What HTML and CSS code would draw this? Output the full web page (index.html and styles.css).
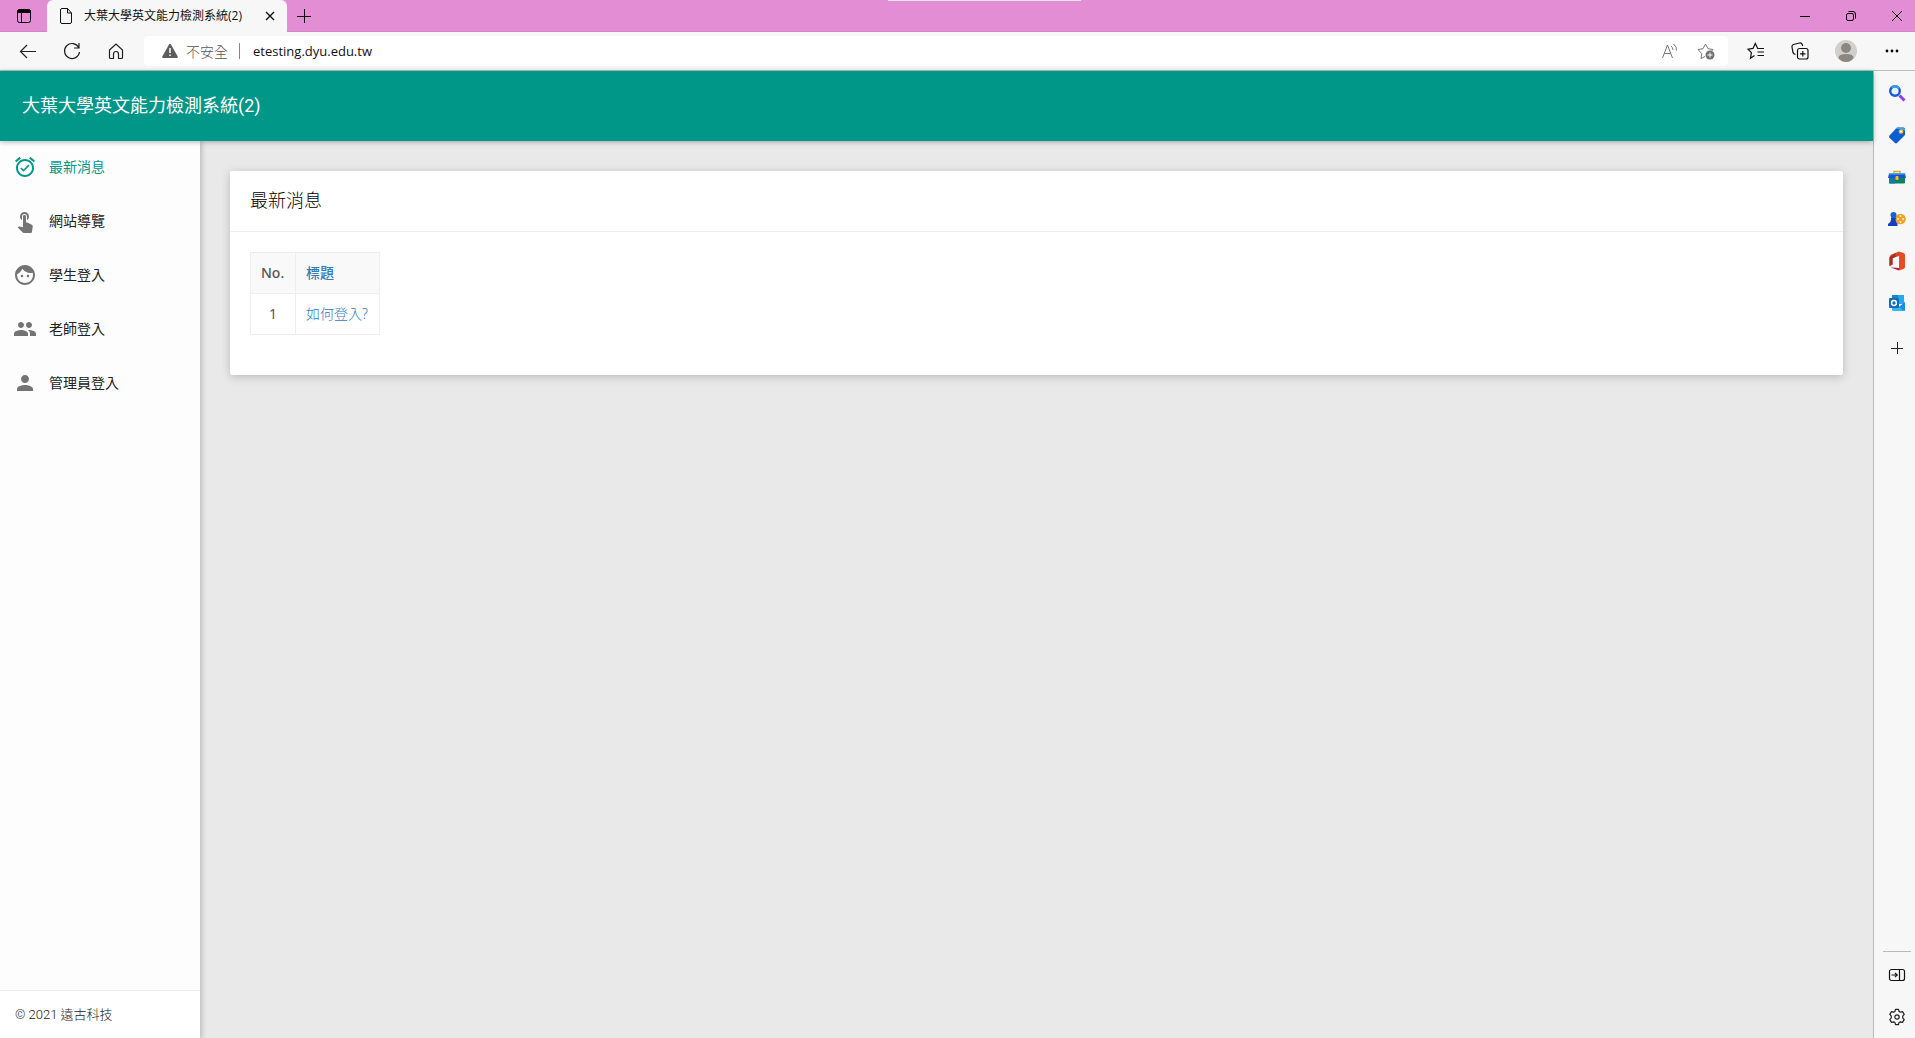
FILE: index.html
```html
<!DOCTYPE html>
<html lang="zh-Hant">
<head>
<meta charset="utf-8">
<title>大葉大學英文能力檢測系統(2)</title>
<link rel="stylesheet" href="styles.css">
</head>
<body>
<div class="titlebar">
  <button class="icon-btn tab-actions" aria-label="Tab actions"><svg width="16" height="16" viewBox="0 0 16 16"><rect x="1.5" y="1.5" width="13" height="13" rx="2" fill="none" stroke="#000"/><path d="M1.500 5V3a1.500 1.500 0 0 1 1.500-1.500h10A1.500 1.500 0 0 1 14.500 3v2z" fill="#000"/><path d="M5.500 5v9.500" stroke="#000"/></svg></button>
  <div class="tab">
    <svg width="14" height="18" viewBox="0 0 14 18" fill="none" stroke="#111"><path d="M3 1.500h5.500l4 4.500v9a1.500 1.500 0 0 1-1.500 1.500H3A1.500 1.500 0 0 1 1.500 15V3A1.500 1.500 0 0 1 3 1.500zM8.500 1.500V6h4"/></svg>
    <span class="tab-title">大葉大學英文能力檢測系統(2)</span>
    <button class="icon-btn" aria-label="Close tab"><svg width="10" height="10" viewBox="0 0 10 10" stroke="#111" stroke-width="1.400"><path d="M1 1l8 8M9 1L1 9"/></svg></button>
  </div>
  <button class="icon-btn new-tab" aria-label="New tab"><svg width="14" height="14" viewBox="0 0 14 14" stroke="#111"><path d="M7.500 0v14M0 7.500h14"/></svg></button>
  <div class="window-controls">
    <button class="icon-btn" aria-label="Minimize"><svg width="12" height="12" viewBox="0 0 12 12" stroke="#000"><path d="M1 6.500h10"/></svg></button>
    <button class="icon-btn" aria-label="Restore"><svg width="12" height="12" viewBox="0 0 12 12" fill="none" stroke="#000"><rect x="1.500" y="3.500" width="7" height="7" rx="1.500"/><path d="M3.500 1.500H8A2.500 2.500 0 0 1 10.500 4v4.500"/></svg></button>
    <button class="icon-btn" aria-label="Close"><svg width="12" height="12" viewBox="0 0 12 12" stroke="#000"><path d="M1 1l10 10M11 1L1 11"/></svg></button>
  </div>
  <span class="grip"></span>
</div>
<div class="toolbar">
  <div class="nav-buttons">
    <button class="icon-btn" aria-label="Back"><svg width="20" height="20" viewBox="0 0 20 20" fill="none" stroke="#222" stroke-width="1.200"><path d="M18 10.500H2.500M9 4l-6.500 6.500L9 17"/></svg></button>
    <button class="icon-btn" aria-label="Refresh"><svg width="20" height="20" viewBox="0 0 20 20" fill="none" stroke="#222" stroke-width="1.200"><path d="M16.700 6.500A7.500 7.500 0 1 0 17.500 11M17 2v5h-5"/></svg></button>
    <button class="icon-btn" aria-label="Home"><svg width="20" height="20" viewBox="0 0 20 20" fill="none" stroke="#222" stroke-width="1.200"><path d="M3.500 9L10 3l6.500 6v7.500q0 1-1 1h-3V13a2.500 2.500 0 0 0-5 0v4.500h-3q-1 0-1-1z"/></svg></button>
  </div>
  <div class="address">
    <svg width="16" height="16" viewBox="0 0 16 16"><path d="M7 1.500q1-1.600 2 0l6.700 12q.6 1.500-1 1.500H1.300q-1.600 0-1-1.500z" fill="#5c5c5c"/><path d="M8 5v5M8 11.500v1.500" stroke="#fff" stroke-width="1.500"/></svg>
    <span class="insecure">不安全</span>
    <input class="url" type="text" aria-label="網址" value="etesting.dyu.edu.tw">
    <button class="icon-btn" aria-label="Read aloud"><svg width="18" height="16" viewBox="0 0 18 16" fill="none" stroke="#777"><path d="M1.500 15L6.500 2l5 13M3.300 10.500h6.500M10 3q2 1.500 2 4M12.500 1q3.500 2.500 3 6.500"/></svg></button>
    <button class="icon-btn" aria-label="Add to favourites"><svg width="18" height="18" viewBox="0 0 18 18"><path d="M8 14.500l-4 2 .7-5L1 7.500l5-.8L8.500 2 11 6.700l5 .8-1.500 1.500" fill="none" stroke="#777"/><circle cx="13" cy="13" r="4.500" fill="#707070"/><path d="M13 10.500v5M10.500 13h5" stroke="#fff"/></svg></button>
  </div>
  <div class="tool-actions">
    <button class="icon-btn" aria-label="Favourites"><svg width="18" height="18" viewBox="0 0 18 18" fill="none" stroke="#111" stroke-width="1.200"><path d="M7.500 13.500l-4 2.700.9-5.500L1 7.200l5-.8L8.300 1.500l2.400 5H17M10.500 10h6.500M10.500 13.500h6.500"/></svg></button>
    <button class="icon-btn" aria-label="Collections"><svg width="18" height="18" viewBox="0 0 18 18" fill="none" stroke="#111" stroke-width="1.200"><rect x="6.500" y="6.500" width="10.500" height="10.500" rx="2"/><path d="M4.500 12.500q-2-.5-2.500-2L1 5q-.3-2 1.500-2.500l6-1.500q2-.4 2.600 1.300L11.700 4M11.800 9v5.500M9 11.800h5.500"/></svg></button>
    <button class="icon-btn" aria-label="Profile"><svg width="22" height="22" viewBox="0 0 22 22"><circle cx="11" cy="11" r="11" fill="#d2cfca"/><circle cx="11" cy="8" r="5" fill="#8c8683"/><path d="M3.500 18q0-4 7.500-4t7.500 4q-3 4-7.500 4t-7.500-4z" fill="#8c8683"/></svg></button>
    <button class="icon-btn" aria-label="More"><svg width="14" height="4" viewBox="0 0 14 4"><circle cx="2" cy="2" r="1.400"/><circle cx="7" cy="2" r="1.400"/><circle cx="12" cy="2" r="1.400"/></svg></button>
  </div>
</div>
<div class="viewport">
  <div class="site">
    <header class="site-header"><a href="#">大葉大學英文能力檢測系統(2)</a></header>
    <div class="site-body">
      <aside class="sidebar">
        <nav class="menu">
          <a href="#" class="active"><svg width="24" height="24" viewBox="0 0 24 24"><path d="M22 5.720l-4.600-3.860-1.290 1.530 4.600 3.860L22 5.720zM7.880 3.390L6.600 1.860 2 5.710l1.290 1.530 4.590-3.850zM12 4c-4.970 0-9 4.030-9 9s4.020 9 9 9c4.970 0 9-4.030 9-9s-4.030-9-9-9zm0 16c-3.870 0-7-3.130-7-7s3.130-7 7-7 7 3.130 7 7-3.130 7-7 7zm-1.460-5.470L8.410 12.400l-1.060 1.060 3.180 3.180 6-6-1.060-1.060-4.930 4.950z"/></svg>最新消息</a>
          <a href="#"><svg width="24" height="24" viewBox="0 0 24 24"><path d="M9 11.240V7.500C9 6.120 10.120 5 11.500 5S14 6.120 14 7.500v3.740c1.210-.81 2-2.180 2-3.740C16 5.010 13.990 3 11.500 3S7 5.010 7 7.500c0 1.560.79 2.930 2 3.740zm9.840 4.630l-4.540-2.260c-.17-.07-.35-.11-.54-.11H13v-6c0-.83-.67-1.500-1.500-1.500S10 6.670 10 7.500v10.740l-3.430-.72c-.08-.01-.15-.03-.24-.03-.31 0-.59.13-.79.33l-.79.800 4.940 4.940c.27.270.650.440 1.060.440h6.790c.75 0 1.330-.55 1.440-1.280l.75-5.270c.01-.07.020-.14.020-.2 0-.62-.38-1.160-.91-1.380z"/></svg>網站導覽</a>
          <a href="#"><svg width="24" height="24" viewBox="0 0 24 24"><path d="M9 11.750c-.69 0-1.250.56-1.250 1.250s.56 1.250 1.250 1.250 1.250-.56 1.250-1.250-.56-1.250-1.250-1.250zm6 0c-.69 0-1.250.56-1.250 1.250s.56 1.250 1.250 1.250 1.250-.56 1.250-1.250-.56-1.250-1.250-1.250zM12 2C6.480 2 2 6.480 2 12s4.480 10 10 10 10-4.480 10-10S17.520 2 12 2zm0 18c-4.410 0-8-3.590-8-8 0-.29.020-.58.050-.86 2.360-1.050 4.230-2.980 5.210-5.370C11.070 8.330 14.050 10 17.420 10c.78 0 1.530-.09 2.250-.26.210.710.330 1.470.330 2.260 0 4.410-3.590 8-8 8z"/></svg>學生登入</a>
          <a href="#"><svg width="24" height="24" viewBox="0 0 24 24"><path d="M16 11c1.660 0 2.990-1.340 2.990-3S17.660 5 16 5c-1.660 0-3 1.340-3 3s1.340 3 3 3zm-8 0c1.660 0 2.990-1.340 2.990-3S9.660 5 8 5C6.340 5 5 6.340 5 8s1.340 3 3 3zm0 2c-2.330 0-7 1.170-7 3.500V19h14v-2.500c0-2.330-4.670-3.500-7-3.500zm8 0c-.29 0-.62.020-.97.050 1.160.840 1.970 1.970 1.970 3.450V19h6v-2.500c0-2.330-4.670-3.500-7-3.500z"/></svg>老師登入</a>
          <a href="#"><svg width="24" height="24" viewBox="0 0 24 24"><path d="M12 12c2.210 0 4-1.790 4-4s-1.790-4-4-4-4 1.790-4 4 1.790 4 4 4zm0 2c-2.670 0-8 1.340-8 4v2h16v-2c0-2.660-5.330-4-8-4z"/></svg>管理員登入</a>
        </nav>
        <footer class="legal">© 2021 遠古科技</footer>
      </aside>
      <main class="content">
        <section class="card">
          <h1>最新消息</h1>
          <div class="card-body">
            <table>
              <colgroup><col class="col-no"><col class="col-title"></colgroup>
              <thead><tr><th>No.</th><th><a href="#">標題</a></th></tr></thead>
              <tbody><tr><td class="num">1</td><td><a href="#">如何登入?</a></td></tr></tbody>
            </table>
          </div>
        </section>
      </main>
    </div>
  </div>
  <div class="edge-bar">
    <button class="icon-btn" aria-label="Search"><svg width="18" height="18" viewBox="0 0 18 18" fill="none"><path d="M11.500 11.500l5 5" stroke="#8a3df0" stroke-width="3"/><circle cx="7" cy="7" r="4.800" fill="#e4f4fd" stroke="#1458d6" stroke-width="2.400"/><path d="M3.500 3.700A4.800 4.800 0 0 1 11 4.500" stroke="#3e9be0" stroke-width="2.400"/></svg></button>
    <button class="icon-btn" aria-label="Shopping"><svg width="18" height="18" viewBox="0 0 18 18"><path d="M9 1.500h6.500q1.500 0 1.500 1.500v6l-8 8q-1 .8-2 0L1.500 11.500q-1-1 0-2z" fill="#0b5ed0"/><path d="M9 1.500h6.500L17 3v2L13 3H7.500z" fill="#3fa3e0"/><path d="M1 10.500l6.500 7-6-6z" fill="#1430c8"/><circle cx="13" cy="5.500" r="1.700" fill="#fff" stroke="#f5b82e" stroke-width="1.300"/></svg></button>
    <button class="icon-btn" aria-label="Tools"><svg width="18" height="18" viewBox="0 0 18 18"><path d="M6 6V3.500h6V6" fill="none" stroke="#e8a92c" stroke-width="1.600"/><path d="M1 9h16v5.500q0 1-1 1H2q-1 0-1-1z" fill="#11805c"/><path d="M1 9h6v6.500H2q-1 0-1-1z" fill="#147b9c"/><path d="M1 5.500h16L18 10H0z" fill="#1756cf"/><path d="M1 5h16v1.500H1z" fill="#48a9e6"/><rect x="7.500" y="8" width="3" height="4" rx="1" fill="#f4bb38"/></svg></button>
    <button class="icon-btn" aria-label="Games"><svg width="18" height="18" viewBox="0 0 18 18"><circle cx="12.500" cy="9" r="5.300" fill="#efa12b"/><g fill="#fff3c5"><circle cx="12.500" cy="6" r="1"/><circle cx="12.500" cy="12" r="1"/><circle cx="10" cy="9" r="1"/><circle cx="15.200" cy="9" r="1"/></g><circle cx="5.500" cy="5" r="3" fill="#1a62cf"/><path d="M3 7.500h5v1.500H7.500q0 3 2 4.500v2.500H0V14q3-1.500 3.300-5H3z" fill="#123fc3"/></svg></button>
    <button class="icon-btn" aria-label="Office"><svg width="18" height="20" viewBox="0 0 18 20"><path d="M11 .5L3.500 3.500Q1.500 4.500 1.500 6.500V15l3-1.500V7L11 5z" fill="#d04a2c"/><path d="M11 .5l4.500 1.500Q17 2.600 17 4v12q0 1.500-1.500 2L11 19.500z" fill="#ec4a22"/><path d="M1.500 15L4 16.500 11 17v2.500L4 17z" fill="#b41f35"/><path d="M1.500 6.500v8.500l3-1.500V7l3-1V2z" fill="#a62c24"/></svg></button>
    <button class="icon-btn" aria-label="Outlook"><svg width="18" height="18" viewBox="0 0 18 18"><path d="M4 1h12v9H4z" fill="#28a8ea"/><path d="M4 1h6v5H4z" fill="#1683cf"/><path d="M4 9l7 4 6-5v8q0 1-1 1H5q-1 0-1-1z" fill="#38b6f0"/><path d="M17 8v8q0 1-1 1l-5-4z" fill="#1490df"/><rect x="1" y="4" width="10" height="10" rx="1" fill="#0f6cbd"/><circle cx="6" cy="9" r="2.400" fill="none" stroke="#fff" stroke-width="1.500"/></svg></button>
    <button class="icon-btn add" aria-label="Add"><svg width="12" height="12" viewBox="0 0 12 12" stroke="#222"><path d="M6.500 0v12M0 6.500h12"/></svg></button>
    <div class="edge-bottom">
      <button class="icon-btn" aria-label="Hide sidebar"><svg width="18" height="18" viewBox="0 0 18 18" fill="none" stroke="#111" stroke-width="1.200"><rect x="1.500" y="3.500" width="15" height="11" rx="2"/><path d="M11.500 3.500v11M3.500 9h5.500M7 6.800L9.200 9 7 11.200"/></svg></button>
      <button class="icon-btn" aria-label="Settings"><svg width="18" height="18" viewBox="0 0 18 18" fill="none" stroke="#222" stroke-width="1.200"><circle cx="9" cy="9" r="2.200"/><path d="M7.500 1.300h3l.6 2.200 1.200.7 2.200-.6 1.700 2.800-1.500 1.700v1.800l1.500 1.700-1.700 2.800-2.200-.6-1.200.7-.6 2.200h-3l-.6-2.200-1.200-.7-2.200.6-1.700-2.800L3.300 9.900V8.100L1.800 6.400l1.700-2.800 2.200.6 1.200-.7z" stroke-linejoin="round"/></svg></button>
    </div>
  </div>
</div>
</body>
</html>
```
FILE: styles.css
```css
* { box-sizing: border-box; }
body {
  margin: 0;
  min-height: 100vh;
  display: flex;
  flex-direction: column;
  background: #f7f7f7;
  font-family: Roboto, "Noto Sans CJK TC", sans-serif;
  font-size: 14px;
}
a { text-decoration: none; }
svg { display: block; flex: none; }
.icon-btn {
  display: flex;
  align-items: center;
  justify-content: center;
  flex: none;
  padding: 0;
  border: 0;
  background: none;
}

.titlebar {
  position: relative;
  display: flex;
  align-items: center;
  height: 32px;
  background: #e38dd4;
  box-shadow: inset 0 -1px #d583c7;
}
.tab-actions { width: 47px; }
.tab {
  display: flex;
  align-items: center;
  width: 240px;
  height: 32px;
  padding: 0 12px;
  border-radius: 6px 6px 0 0;
  background: #f7f7f7;
}
.tab-title {
  flex: 1;
  padding-left: 11px;
  font-family: "Open Sans", "Noto Sans CJK TC", sans-serif;
  font-size: 12px;
  line-height: 16px;
  color: #111;
  white-space: nowrap;
}
.new-tab { width: 34px; }
.window-controls {
  display: flex;
  gap: 34px;
  margin-left: auto;
  padding-right: 12px;
}
.grip {
  position: absolute;
  top: 0;
  left: 50%;
  width: 193px;
  height: 1px;
  margin-left: -70px;
  background: #e6e6e6;
}

.toolbar {
  display: flex;
  align-items: center;
  height: 39px;
  border-bottom: 1px solid #b9bebd;
}
.nav-buttons {
  display: flex;
  gap: 24px;
  padding: 0 18px;
}
.address {
  display: flex;
  align-items: center;
  flex: 1;
  height: 30px;
  padding: 0 13px 0 18px;
  border-radius: 4px;
  background: #fff;
}
.insecure {
  margin-left: 8px;
  padding-right: 11px;
  border-right: 1px solid #888;
  font-family: "Noto Sans CJK TC", sans-serif;
  font-weight: 300;
  line-height: 16px;
  color: #555;
}
.url {
  flex: 1;
  margin-left: 13px;
  padding: 0;
  border: 0;
  outline: 0;
  background: none;
  font-family: "Open Sans", sans-serif;
  font-size: 13px;
  color: #111;
}
.address .icon-btn + .icon-btn { margin-left: 18px; }
.tool-actions {
  display: flex;
  align-items: center;
  gap: 26px;
  padding: 0 16px 0 19px;
}
.tool-actions .icon-btn:last-child { margin-left: 2px; }

.viewport { display: flex; flex: 1; }
.site {
  display: flex;
  flex: 1;
  flex-direction: column;
  background: #e9e9e9;
  border-right: 1px solid #b9b9b9;
}
.site-header {
  z-index: 2;
  display: flex;
  align-items: center;
  height: 70px;
  padding: 0 22px;
  background: #009688;
  box-shadow: 0 1px 5px rgba(0, 0, 0, .3);
}
.site-header a { font-size: 18px; line-height: 24px; color: #fff; }
.site-body { display: flex; flex: 1; }
.sidebar {
  z-index: 1;
  display: flex;
  flex-direction: column;
  width: 200px;
  background: #fdfdfd;
  box-shadow: 2px 0 5px rgba(0, 0, 0, .2);
}
.menu {
  display: flex;
  flex-direction: column;
  gap: 10px;
  padding-top: 4px;
}
.menu a {
  display: flex;
  align-items: center;
  gap: 12px;
  height: 44px;
  padding: 0 13px;
  line-height: 20px;
  color: #222;
}
.menu svg { fill: #747474; }
.menu .active { color: #009688; }
.menu .active svg { fill: #009688; }
.legal {
  margin-top: auto;
  padding: 15px;
  border-top: 1px solid #eee;
  background: #fff;
  font-size: 13px;
  line-height: 17px;
  font-weight: 300;
  color: #222;
}
.content { flex: 1; padding: 30px; }
.card {
  border-radius: 2px;
  background: #fff;
  box-shadow: 0 2px 10px rgba(0, 0, 0, .2);
}
.card h1 {
  margin: 0;
  padding: 18px 20px;
  border-bottom: 1px solid #eee;
  font-size: 18px;
  line-height: 24px;
  font-weight: 300;
  color: #000;
}
.card-body { padding: 20px 20px 40px; }
table {
  border-collapse: collapse;
  font-family: "Noto Sans", "Noto Sans CJK TC", sans-serif;
  line-height: 20px;
  color: #555;
}
.col-no { width: 45px; }
.col-title { width: 84px; }
th, td { padding: 10px; border: 1px solid #eee; text-align: left; }
th { background: #f9f9f9; font-weight: 500; }
td { font-weight: 400; }
td a, th a { color: #337ab7; }
td a { font-weight: 300; }
td.num { text-align: center; }

.edge-bar {
  display: flex;
  flex-direction: column;
  width: 41px;
  padding: 1px 0 0 5px;
}
.edge-bar .icon-btn { width: 36px; height: 42px; }
.edge-bar .add { margin-top: 3px; }
.edge-bottom {
  width: 28px;
  margin: auto 0 0 4px;
  padding-top: 2px;
  border-top: 1px solid #b9b9b9;
}
.edge-bottom .icon-btn { width: 28px; }
```
